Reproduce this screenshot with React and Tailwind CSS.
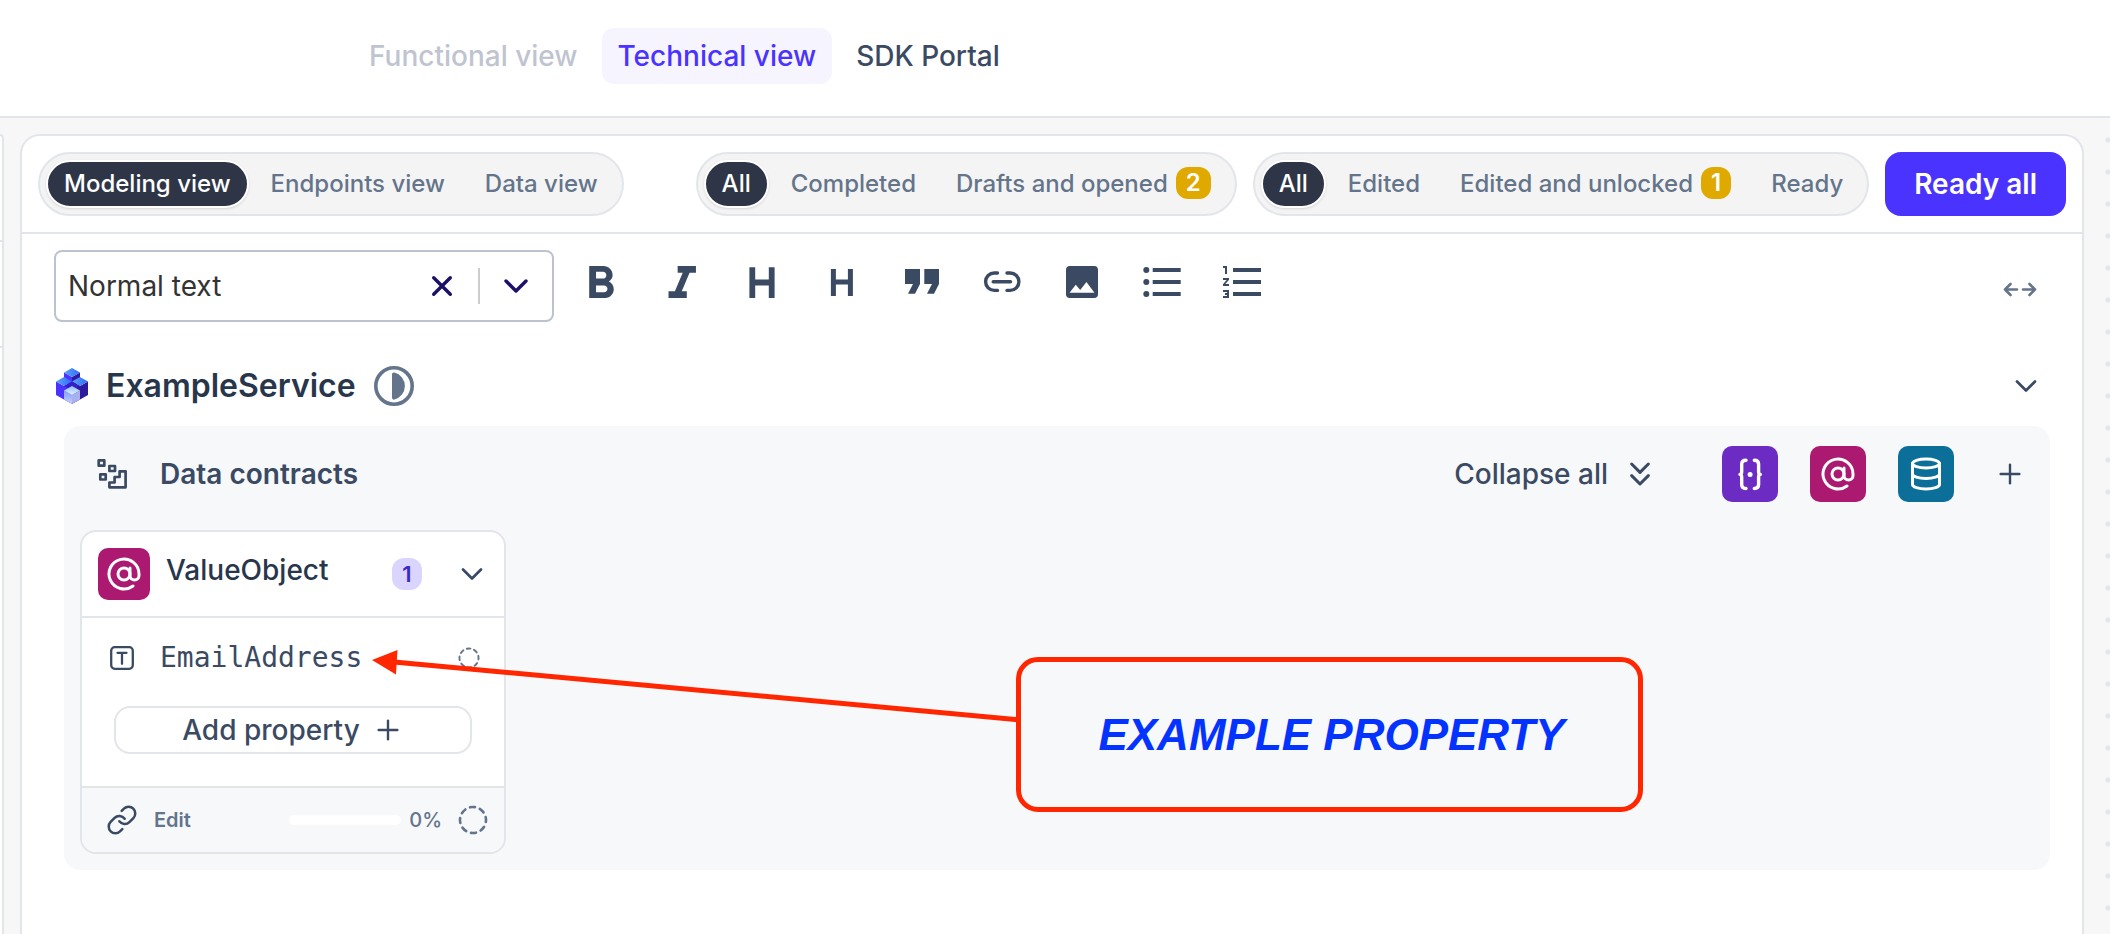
import { AtSign, ChevronDown, ChevronsDown, Database, Link, Plus } from 'lucide-react';
import { MdFormatListNumbered } from 'react-icons/md';

function ViewLink({ children, tone }) {
  return (
    <a href="#" className={`rounded-xl px-4 py-3 text-[28px] leading-8 font-medium ${tone}`}>
      {children}
    </a>
  );
}

function SegmentedGroup({ label, items }) {
  return (
    <div
      role="group"
      aria-label={label}
      className="flex shrink-0 items-center gap-1 rounded-full border-2 border-[#e2e5ea] bg-[#f4f4f4] p-1.5"
    >
      {items.map((item, index) => (
        <button
          key={item.label}
          type="button"
          aria-pressed={index === 0}
          className={`flex h-12 items-center gap-2 rounded-full border-2 px-4 text-2xl font-medium whitespace-nowrap ${
            index === 0
              ? 'border-white bg-[#2e3547] text-white shadow-sm'
              : 'border-transparent text-[#64748b]'
          }`}
        >
          {item.label}
          {item.count && (
            <span className="mb-0.5 rounded-xl bg-[#dfa900] px-2.5 text-2xl leading-8 font-semibold text-white">
              {item.count}
            </span>
          )}
        </button>
      ))}
    </div>
  );
}

function ToolButton({ label, viewBox = '0 0 48 48', children }) {
  return (
    <button type="button" aria-label={label} className="size-12 text-[#3b4a63]">
      <svg viewBox={viewBox} className="size-12" fill="currentColor">
        {children}
      </svg>
    </button>
  );
}

function ServiceLogo() {
  return (
    <svg viewBox="0 0 32 36" className="h-9 w-8" aria-hidden="true">
      <defs>
        <linearGradient id="top" x1="0" x2="1">
          <stop offset="0" stopColor="#5ea2ff" />
          <stop offset="1" stopColor="#2f6bf5" />
        </linearGradient>
        <linearGradient id="pale" x1="0" y1="0" x2="0" y2="1">
          <stop offset="0" stopColor="#8cc0ff" />
          <stop offset="1" stopColor="#e6f1ff" />
        </linearGradient>
        <linearGradient id="face" x1="0" y1="0" x2="0" y2="1">
          <stop offset="0" stopColor="#7ea0ff" />
          <stop offset="1" stopColor="#c9cdfa" />
        </linearGradient>
      </defs>
      <path d="M8 4.500 16 9v9l-8-4.500z" fill="#4a33ff" />
      <path d="M24 4.500 16 9v9l8-4.500z" fill="#2d1a9e" />
      <path d="M16 0l8 4.500L16 9 8 4.500z" fill="url(#top)" />
      <path d="M0 13.500 8 18l8-4.500V36L0 27z" fill="#4a33ff" />
      <path d="M32 13.500 24 18l-8-4.500V36l16-9z" fill="#2d1a9e" />
      <path d="M8 9l8 4.500L8 18l-8-4.500z" fill="url(#top)" />
      <path d="M24 9l8 4.500-8 4.500-8-4.500z" fill="url(#top)" />
      <path d="M16 13.500 24 18l-8 4.500L8 18z" fill="#3420c4" />
      <path d="M8 22.500 16 27v9l-8-4.500z" fill="url(#face)" />
      <path d="M24 22.500 16 27v9l8-4.500z" fill="#a9b0f0" />
      <path d="M16 18l8 4.500-8 4.500-8-4.500z" fill="url(#pale)" />
    </svg>
  );
}

function HalfCircle() {
  return (
    <svg viewBox="0 0 40 40" className="size-10 text-[#64748b]" aria-hidden="true">
      <circle cx="20" cy="20" r="18.200" fill="none" stroke="currentColor" strokeWidth="3.600" />
      <path d="M18 8.500a2 2 0 0 1 2.400-2A14 14 0 0 1 20.400 33.600a2 2 0 0 1-2.400-2z" fill="currentColor" />
    </svg>
  );
}

function ContractsIcon() {
  return (
    <svg viewBox="0 0 32 32" className="size-8" fill="none" stroke="currentColor" strokeWidth="2.700" strokeLinejoin="round">
      <rect x="2.700" y="2.300" width="5.600" height="5.400" />
      <rect x="13.400" y="8" width="5.600" height="5" />
      <rect x="4.300" y="16.300" width="5.400" height="5.200" />
      <path d="M13.400 29.300V24.500h5.200V19h5v-5.700h6v16z" />
    </svg>
  );
}

function BracesIcon() {
  return (
    <svg viewBox="0 0 56 56" className="size-14" fill="none" stroke="currentColor" strokeWidth="3.400" strokeLinecap="round" strokeLinejoin="round">
      <path d="M24 14.300c-3 0-4.300 1.500-4.300 4v7.500c0 1.500-.7 2.400-1.700 2.600 1 .2 1.700 1.100 1.700 2.600v7.500c0 2.500 1.300 4 4.300 4" />
      <path d="M32.300 14.300c3 0 4.300 1.500 4.300 4v7.500c0 1.500.7 2.400 1.700 2.600-1 .2-1.700 1.100-1.700 2.600v7.500c0 2.500-1.300 4-4.300 4" />
      <circle cx="28.100" cy="28.400" r="2.500" fill="currentColor" stroke="none" />
    </svg>
  );
}

function DashedCircle({ className, width, dash }) {
  return (
    <svg viewBox="0 0 30 30" className={className} fill="none" stroke="currentColor" aria-hidden="true">
      <circle cx="15" cy="15" r="13" strokeWidth={width} strokeDasharray={dash} strokeDashoffset="3" strokeLinecap="round" pathLength="80" />
    </svg>
  );
}

function Toolbar() {
  return (
    <div className="flex items-start gap-6">
      <div className="flex h-18 w-[500px] items-center rounded-lg border-2 border-[#bcc2d0] text-[#1c1166]">
        <select
          aria-label="Text style"
          defaultValue="Normal text"
          className="h-full min-w-0 flex-1 appearance-none bg-transparent pl-3 text-[28px] text-[#333333] outline-none"
        >
          <option>Normal text</option>
          <option>Heading 1</option>
          <option>Heading 2</option>
        </select>
        <button type="button" aria-label="Clear" className="px-4">
          <svg viewBox="0 0 40 40" className="size-10" fill="none" stroke="currentColor" strokeWidth="3.400" strokeLinecap="round">
            <path d="M11.700 11.700l16.600 16.600M28.300 11.700L11.700 28.300" />
          </svg>
        </button>
        <span className="h-9 w-0.5 bg-[#cccccc]" />
        <button type="button" aria-label="Open text styles" className="px-4">
          <svg viewBox="0 0 40 40" className="size-10" fill="none" stroke="currentColor" strokeWidth="3.400" strokeLinecap="round" strokeLinejoin="round">
            <path d="M10 15l10 10 10-10" />
          </svg>
        </button>
      </div>
      <div className="mt-2 flex gap-8">
        <ToolButton label="Bold" viewBox="2.1 0.5 21 21">
          <path d="M15.600 10.790c.970-.670 1.650-1.770 1.650-2.790 0-2.260-1.750-4-4-4H7v14h7.040c2.090 0 3.710-1.700 3.710-3.790 0-1.520-.860-2.820-2.150-3.420zM10 6.500h3c.830 0 1.500.670 1.500 1.500s-.670 1.500-1.500 1.500h-3v-3zm3.500 9H10v-3h3.500c.830 0 1.500.670 1.500 1.500s-.670 1.500-1.500 1.500z" />
        </ToolButton>
        <ToolButton label="Italic" viewBox="1.4 0.5 21 21">
          <path d="M10 4v3h2.210l-3.420 8H6v3h8v-3h-2.210l3.420-8H18V4z" />
        </ToolButton>
        <ToolButton label="Large heading">
          <path d="M14.300 9.300V40M33.700 9.300V40M14 24.500h20" stroke="currentColor" strokeWidth="5.800" />
        </ToolButton>
        <ToolButton label="Small heading">
          <path d="M15.400 11v27M32.400 11v27M15 24h17" stroke="currentColor" strokeWidth="5" />
        </ToolButton>
        <ToolButton label="Quote">
          <path d="M7 11h15v15l-5 9.700h-7L15 26H7zM26.300 11h14.700v15l-5 9.700h-7l5-9.700h-7.700z" />
        </ToolButton>
        <ToolButton label="Insert link">
          <path
            d="M19.500 15h-3.200a8.700 8.700 0 0 0 0 17.400h3.200M29 15h3.200a8.700 8.700 0 0 1 0 17.400H29M15.200 23.700h17.300"
            fill="none"
            stroke="currentColor"
            strokeWidth="3.400"
            strokeLinecap="round"
          />
        </ToolButton>
        <ToolButton label="Insert image" viewBox="-1.5 -1.5 27 27">
          <path d="M21 19V5c0-1.100-.9-2-2-2H5c-1.100 0-2 .9-2 2v14c0 1.100.9 2 2 2h14c1.100 0 2-.9 2-2zM8.500 13.500l2.500 3.010L14.500 12l4.500 6H5l3.500-4.500z" />
        </ToolButton>
        <ToolButton label="Bulleted list">
          <circle cx="8.300" cy="12" r="3" />
          <circle cx="8.300" cy="24" r="3" />
          <circle cx="8.300" cy="36" r="3" />
          <path d="M14.700 12h28M14.700 24h28M14.700 36h28" stroke="currentColor" strokeWidth="4" />
        </ToolButton>
        <button type="button" aria-label="Numbered list" className="size-12 text-[#3b4a63]">
          <MdFormatListNumbered viewBox="-0.5 0 24 24" className="size-12" />
        </button>
      </div>
      <button type="button" aria-label="Change width" className="mt-4 mr-2 ml-auto text-[#64748b]">
        <svg viewBox="0 0 44 48" className="h-12 w-11" fill="none" stroke="currentColor" strokeWidth="2.600" strokeLinecap="round" strokeLinejoin="round">
          <path d="M19 23.500H7M12.500 18l-5.500 5.500 5.500 5.500M25 23.500h12M31.500 18l5.500 5.500-5.500 5.500" />
        </svg>
      </button>
    </div>
  );
}

function ValueObjectCard() {
  return (
    <article className="w-[426px] overflow-hidden rounded-2xl border-2 border-[#e2e5ea] bg-white">
      <header className="flex h-[86px] items-center border-b-2 border-[#e2e5ea] pr-3.5 pl-4">
        <span className="flex size-13 items-center justify-center rounded-[10px] bg-[#ab1a70] text-white">
          <AtSign className="size-9" />
        </span>
        <h3 className="ml-4 pb-2 text-[28px] leading-8 font-medium text-[#28364c]">ValueObject</h3>
        <span className="ml-auto w-[30px] rounded-xl bg-[#dad5ff] text-center text-[22px] leading-8 font-semibold text-[#3b28cc]">
          1
        </span>
        <button type="button" aria-label="Collapse ValueObject" className="ml-8">
          <ChevronDown className="size-9" strokeWidth={1.8} />
        </button>
      </header>
      <div className="pt-5 pb-8">
        <div className="flex h-10 items-center pr-6 pl-7">
          <svg viewBox="0 0 24 24" className="size-6" fill="none" stroke="currentColor" strokeWidth="2.300" strokeLinecap="round" aria-hidden="true">
            <rect x="1.200" y="1.200" width="21.600" height="21.600" rx="3.500" />
            <path d="M7.500 6.800h9M12 6.800v11" />
          </svg>
          <span className="ml-[26px] font-['DejaVu_Sans_Mono',monospace] text-[28px] leading-10">EmailAddress</span>
          <DashedCircle className="ml-auto size-[22px] text-[#64748b]" width="2.600" dash="5 5" />
        </div>
        <div className="mx-8 mt-7">
          <button
            type="button"
            className="flex h-12 w-full items-center justify-center gap-3 rounded-2xl border-2 border-[#e2e5ea] text-[28px] font-medium"
          >
            Add property
            <Plus className="size-8" strokeWidth={1.8} />
          </button>
        </div>
      </div>
      <footer className="flex h-[66px] items-center border-t-2 border-[#e2e5ea] bg-[#f6f8fa] pr-4 pl-6 text-xl font-medium text-[#64748b]">
        <Link className="size-8 text-[#3b4a63]" strokeWidth={1.9} />
        <button type="button" className="ml-4 font-semibold">
          Edit
        </button>
        <div role="progressbar" aria-label="Progress" aria-valuenow={0} className="ml-auto h-2.5 w-28 rounded-full bg-white" />
        <span className="ml-2">0%</span>
        <DashedCircle className="ml-4 size-[30px]" width="2.600" dash="5 5" />
      </footer>
    </article>
  );
}

function Annotation() {
  return (
    <>
      <svg viewBox="0 0 648 80" className="absolute top-[222px] left-[308px] h-20 w-[648px]" aria-hidden="true">
        <path d="M22 14L648 72" stroke="#ff2600" strokeWidth="5" />
        <path d="M0 12l25.500-10L24 26.500z" fill="#ff2600" />
      </svg>
      <div className="absolute top-[231px] left-[952px] flex h-[155px] w-[627px] items-center justify-center rounded-[22px] border-5 border-[#ff2600] pl-1">
        <span className="font-['Liberation_Sans',sans-serif] text-[44px] leading-none font-bold whitespace-nowrap text-[#0433ff] italic">
          EXAMPLE PROPERTY
        </span>
      </div>
    </>
  );
}

function DataContracts() {
  return (
    <section className="relative ml-2.5 rounded-2xl bg-[#f6f8fa] pb-4">
      <div className="flex h-24 items-center gap-8 pr-4 pl-8">
        <ContractsIcon />
        <h2 className="text-[28px] font-semibold">Data contracts</h2>
        <button type="button" className="mr-[30px] ml-auto flex items-center gap-3 text-[28px] font-medium">
          Collapse all
          <ChevronsDown className="size-10" strokeWidth={1.8} />
        </button>
        <button type="button" aria-label="Add object" className="flex size-14 items-center justify-center rounded-[10px] bg-[#6c2bc2] text-white">
          <BracesIcon />
        </button>
        <button type="button" aria-label="Add value object" className="flex size-14 items-center justify-center rounded-[10px] bg-[#ab1a70] text-white">
          <AtSign className="size-9" />
        </button>
        <button type="button" aria-label="Add entity" className="flex size-14 items-center justify-center rounded-[10px] bg-[#0b6f99] text-white">
          <Database className="size-9" />
        </button>
        <button type="button" aria-label="Add contract" className="flex size-12 items-center justify-center">
          <Plus className="size-8" strokeWidth={1.8} />
        </button>
      </div>
      <div className="px-4 pt-2">
        <ValueObjectCard />
      </div>
      <Annotation />
    </section>
  );
}

export default function App() {
  return (
    <div className="flex min-h-screen flex-col bg-[#f7f7f7] font-['Inter',sans-serif] text-[#3b4a63]">
      <header className="border-b-2 border-[#e2e5ea] bg-white">
        <nav className="flex items-center gap-2 pt-7 pb-8 pl-[353px]">
          <ViewLink tone="text-[#bfc4d0]">Functional view</ViewLink>
          <ViewLink tone="bg-[#f6f4ff] text-[#4a33ff]">Technical view</ViewLink>
          <ViewLink tone="text-[#3b4a63]">SDK Portal</ViewLink>
        </nav>
      </header>
      <div className="flex flex-1">
        <aside className="mt-4 flex w-1 flex-col overflow-hidden rounded-tr-2xl border-t-2 border-r-2 border-[#e2e5ea] bg-white">
          <div className="h-[106px] border-b-2 border-[#e2e5ea]" />
          <div className="h-[106px] border-b-2 border-[#e2e5ea]" />
        </aside>
        <main className="mt-4 ml-4 min-w-0 flex-1 rounded-t-[20px] border-2 border-b-0 border-[#e2e5ea] bg-white">
          <div className="flex items-center gap-4 border-b-2 border-[#e2e5ea] p-4">
            <SegmentedGroup
              label="View"
              items={[{ label: 'Modeling view' }, { label: 'Endpoints view' }, { label: 'Data view' }]}
            />
            <span className="flex-1" />
            <SegmentedGroup
              label="Completion"
              items={[{ label: 'All' }, { label: 'Completed' }, { label: 'Drafts and opened', count: 2 }]}
            />
            <SegmentedGroup
              label="Status"
              items={[
                { label: 'All' },
                { label: 'Edited' },
                { label: 'Edited and unlocked', count: 1 },
                { label: 'Ready' },
              ]}
            />
            <button type="button" className="h-16 rounded-2xl bg-[#4a33ff] px-[29px] text-[28px] font-semibold whitespace-nowrap text-white">
              Ready all
            </button>
          </div>
          <div className="px-8 pt-4">
            <Toolbar />
            <div className="mt-6 flex h-20 items-center gap-[18px] pl-0.5 pr-1.5">
              <ServiceLogo />
              <h1 className="text-[32px] font-semibold text-[#28364c]">ExampleService</h1>
              <HalfCircle />
              <button type="button" aria-label="Collapse service" className="ml-auto">
                <ChevronDown className="size-9" strokeWidth={1.8} />
              </button>
            </div>
            <DataContracts />
          </div>
        </main>
        <div className="w-[26px] bg-[radial-gradient(circle,#e2e5ea_2px,transparent_3px)] bg-size-[32px_32px] bg-position-[8px_6px]" />
      </div>
    </div>
  );
}
